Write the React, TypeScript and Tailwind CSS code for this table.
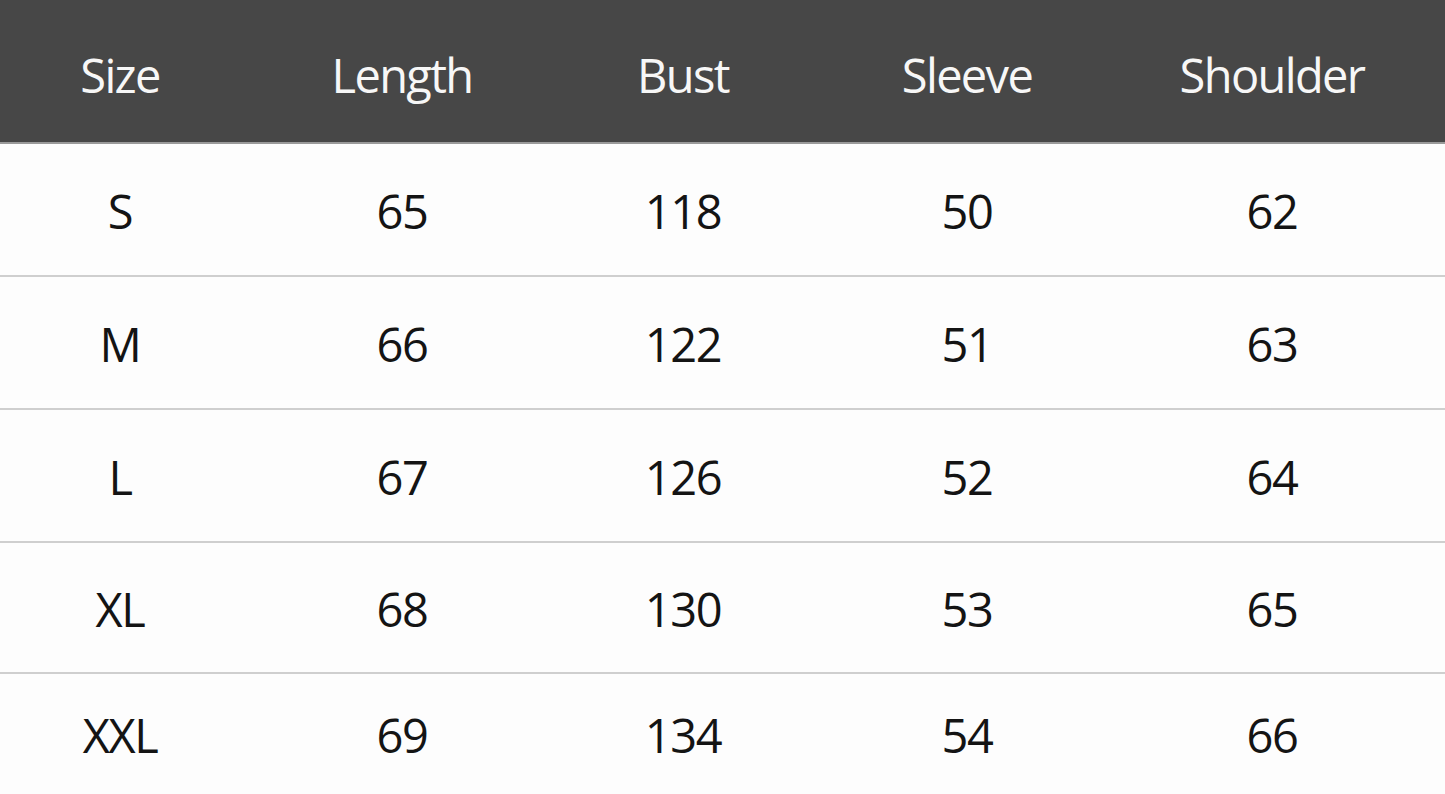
import React from "react";

const headers = ["Size", "Length", "Bust", "Sleeve", "Shoulder"];
const rows = [
  ["S", "65", "118", "50", "62"],
  ["M", "66", "122", "51", "63"],
  ["L", "67", "126", "52", "64"],
  ["XL", "68", "130", "53", "65"],
  ["XXL", "69", "134", "54", "66"],
];
const heights = ["h-[133px]", "h-[133px]", "h-[133px]", "h-[131px]"];

const grid = "grid grid-cols-[240px_324px_238px_330px_1fr] items-center";

export default function App() {
  return (
    <div
      className="w-[1445px] h-[794px] flex flex-col bg-[#fdfdfd] overflow-hidden"
      style={{ fontFamily: '"Open Sans", "Noto Sans", sans-serif' }}
    >
      <div className={`${grid} h-[144px] shrink-0 bg-[#474747] border-b-2 border-[#9a9a9a] text-[#f7f7f7] text-[47px] tracking-[-0.035em]`}>
        {headers.map((h, i) => (
          <div key={h} className={`text-center ${i === 4 ? "pr-[33px]" : ""} pt-[8px]`}>
            {h}
          </div>
        ))}
      </div>
      {rows.map((r, ri) => (
        <div
          key={r[0]}
          className={`${grid} ${ri === rows.length - 1 ? "flex-1" : `${heights[ri]} border-b-2 border-[#cfcfcf] shrink-0`} text-[#141414] text-[47px] tracking-[-0.03em]`}
        >
          {r.map((c, i) => (
            <div key={i} className={`text-center ${i === 4 ? "pr-[33px]" : ""} pt-[3px]`}>
              {c}
            </div>
          ))}
        </div>
      ))}
    </div>
  );
}
